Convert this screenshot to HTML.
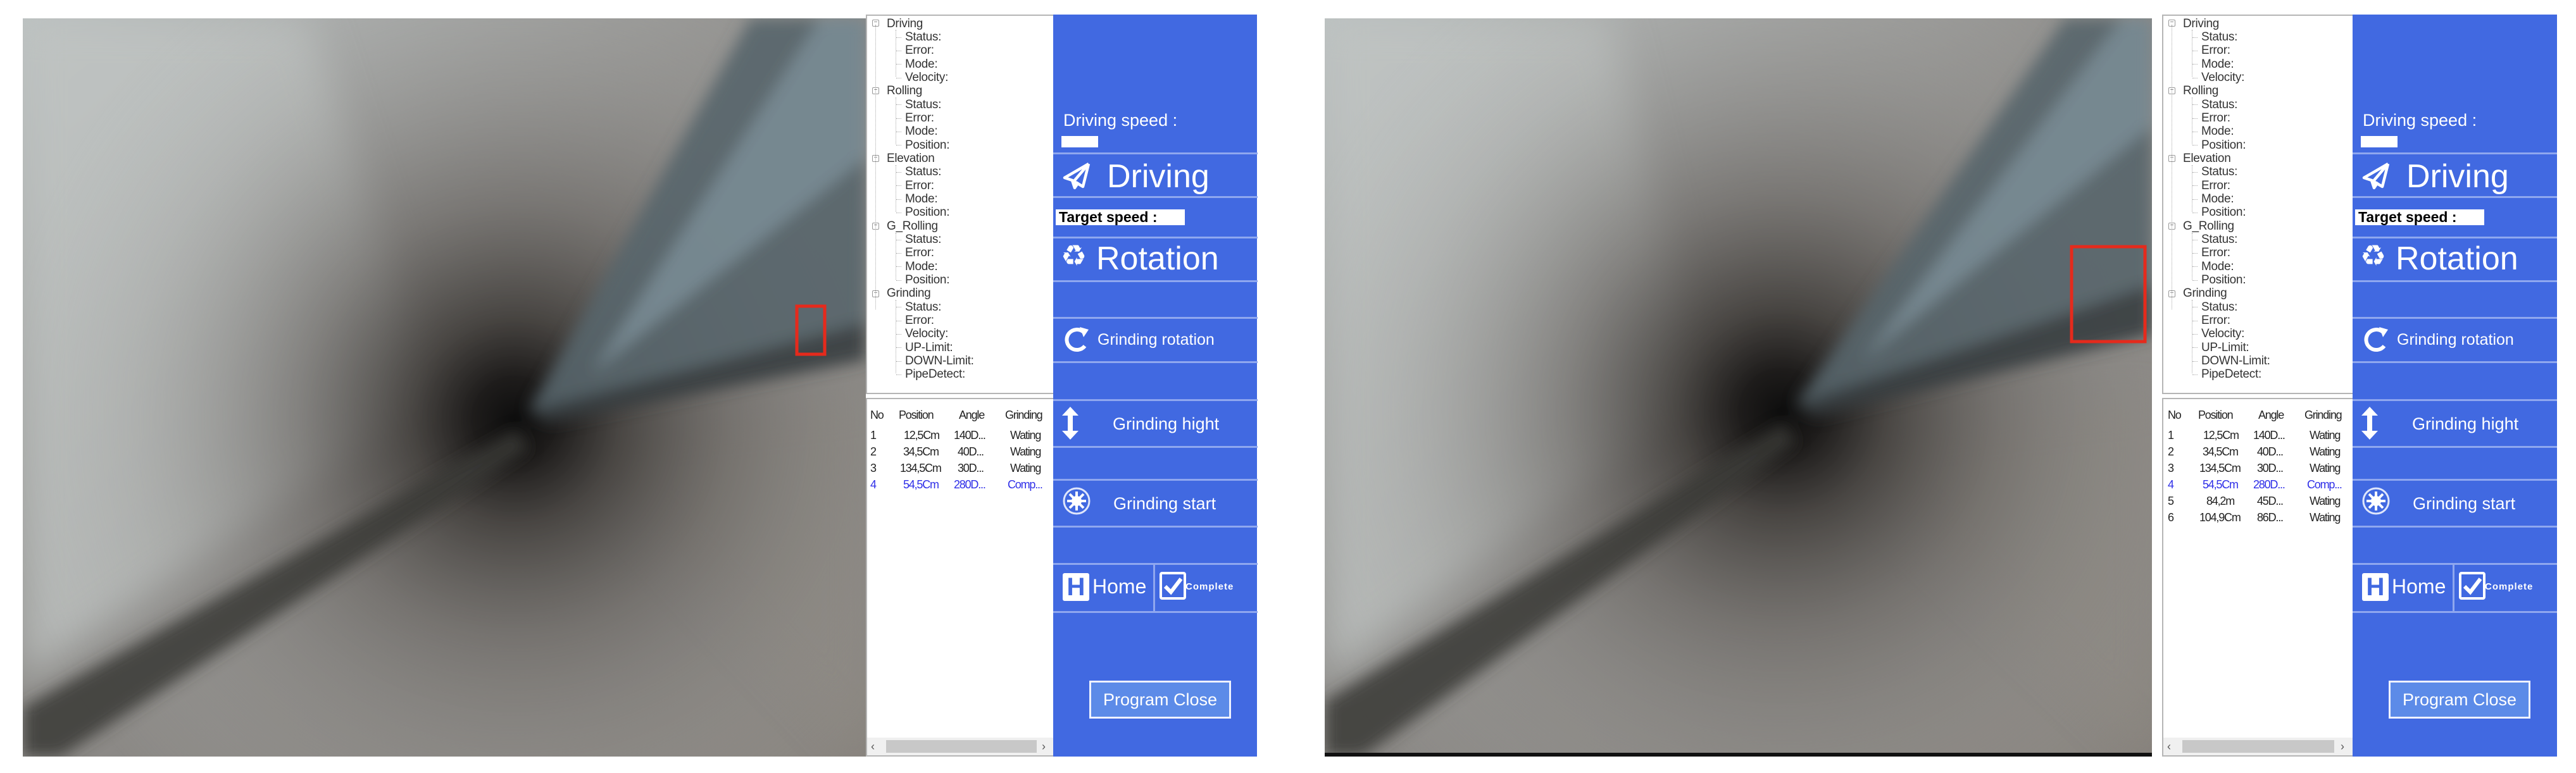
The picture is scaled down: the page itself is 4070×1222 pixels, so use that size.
<!DOCTYPE html>
<html><head><meta charset="utf-8">
<style>
*{margin:0;padding:0;box-sizing:border-box}
body{width:4070px;height:1222px;background:#fff;position:relative;overflow:hidden;font-family:"Liberation Sans","DejaVu Sans",sans-serif}
.cam{position:absolute}
.grp{position:absolute;top:23px;width:618px;height:1173px}
.tree{position:absolute;left:0;top:0;width:296px;height:600px;border:2px solid #b5b5b5;border-right:none;background:#fff;overflow:hidden}
.tr{position:absolute;font-size:19px;color:#333;line-height:21px;white-space:nowrap;letter-spacing:-0.3px}
.pm{position:absolute;width:11px;height:11px;border:1px solid #999;border-radius:2px;font-size:10px;line-height:8px;text-align:center;color:#666}
.vl{position:absolute;border-left:1px dotted #aaa}
.hl{position:absolute;border-top:1px dotted #aaa;width:8px}
.list{position:absolute;left:0;top:606px;width:296px;height:567px;border:2px solid #b5b5b5;border-right:none;background:#fff;overflow:hidden}
.lr{position:absolute;font-size:18px;line-height:22px;color:#222;letter-spacing:-1.2px;white-space:nowrap}
.blue{position:absolute;left:296px;top:0;width:322px;height:1173px;background:#4169e1}
.sep{position:absolute;left:0;width:323px;height:3px;background:#8fa7ef}
.t{position:absolute;color:#fff;white-space:nowrap}
</style></head><body>

<svg width="0" height="0" style="position:absolute">
<defs>
<linearGradient id="bg1" x1="0" y1="0" x2="1" y2="1"><stop offset="0" stop-color="#bcc1c1"/><stop offset="0.5" stop-color="#8c8a87"/><stop offset="1" stop-color="#86817b"/></linearGradient>
<filter id="bl" x="-0.2" y="-0.2" width="1.4" height="1.4"><feGaussianBlur stdDeviation="30"/></filter>
<filter id="bl2" x="-0.2" y="-0.2" width="1.4" height="1.4"><feGaussianBlur stdDeviation="12"/></filter>
</defs></svg>

<!-- LEFT CAMERA -->
<svg class="cam" style="left:36px;top:29px" width="1332" height="1167" viewBox="0 0 1332 1167">
<defs>
<radialGradient id="rc1" cx="777" cy="634" r="820" gradientUnits="userSpaceOnUse"><stop offset="0" stop-color="#0e0e0e"/><stop offset="0.08" stop-color="#1e1c1b"/><stop offset="0.2" stop-color="#45423f" stop-opacity="0.95"/><stop offset="0.42" stop-color="#6e6b68" stop-opacity="0.7"/><stop offset="0.75" stop-color="#9a9a98" stop-opacity="0.25"/><stop offset="1" stop-color="#b8bbba" stop-opacity="0"/></radialGradient>
</defs>
<rect width="1332" height="1167" fill="url(#bg1)"/>
<g filter="url(#bl)">
<polygon points="0,0 450,0 650,600 0,1050" fill="#c0c4c3" opacity="0.75"/>
<polygon points="850,660 1332,1167 1332,600" fill="#8a847d" opacity="0.8"/>
</g>
<rect width="1332" height="1167" fill="url(#rc1)"/>
<g filter="url(#bl2)">
<polygon points="800,620 1150,0 1332,0 1332,480" fill="#56656c" opacity="0.9"/>
<polygon points="900,560 1260,0 1332,0 1332,220" fill="#7d9098" opacity="0.8"/>
<polygon points="800,620 1332,480 1332,540 830,640" fill="#383d40" opacity="0.9"/>
<polygon points="780,650 0,1090 0,1167 60,1167 800,680" fill="#3a3835" opacity="0.85"/>
</g>
<rect x="1223" y="455" width="44" height="76" fill="none" stroke="#e52a1c" stroke-width="5"/>
</svg>

<!-- RIGHT CAMERA -->
<svg class="cam" style="left:2093px;top:29px" width="1307" height="1167" viewBox="0 0 1307 1167">
<defs>
<radialGradient id="rc2" cx="722" cy="621" r="820" gradientUnits="userSpaceOnUse"><stop offset="0" stop-color="#0e0e0e"/><stop offset="0.08" stop-color="#1e1c1b"/><stop offset="0.2" stop-color="#45423f" stop-opacity="0.95"/><stop offset="0.42" stop-color="#6e6b68" stop-opacity="0.7"/><stop offset="0.75" stop-color="#9a9a98" stop-opacity="0.25"/><stop offset="1" stop-color="#b8bbba" stop-opacity="0"/></radialGradient>
</defs>
<rect width="1307" height="1167" fill="url(#bg1)"/>
<g filter="url(#bl)">
<polygon points="0,0 450,0 600,600 0,1050" fill="#c0c4c3" opacity="0.75"/>
<polygon points="780,660 1307,1167 1307,600" fill="#8a847d" opacity="0.8"/>
</g>
<rect width="1307" height="1167" fill="url(#rc2)"/>
<g filter="url(#bl2)">
<polygon points="745,610 1170,0 1307,0 1307,420" fill="#56656c" opacity="0.9"/>
<polygon points="850,540 1260,0 1307,0 1307,170" fill="#7d9098" opacity="0.8"/>
<polygon points="745,610 1307,420 1307,500 775,630" fill="#383d40" opacity="0.9"/>
<polygon points="725,640 0,1080 0,1167 60,1167 745,670" fill="#3a3835" opacity="0.85"/>
</g>
<rect x="0" y="1161" width="1307" height="6" fill="#111"/>
<rect x="1180" y="361" width="116" height="150" fill="none" stroke="#e52a1c" stroke-width="5"/>
</svg>

<!-- PANEL LEFT -->
<div class="grp" style="left:1368px">
 <div class="tree">
  <div class="vl" style="left:13px;top:14px;height:450px"></div>
  <div class="pm" style="left:8px;top:6px">−</div><div class="tr" style="left:31px;top:2px">Driving</div>
  <div class="vl" style="left:45px;top:22px;height:74px"></div>
  <div class="hl" style="left:46px;top:34px"></div><div class="tr" style="left:60px;top:23px">Status:</div>
  <div class="hl" style="left:46px;top:55px"></div><div class="tr" style="left:60px;top:44px">Error:</div>
  <div class="hl" style="left:46px;top:76px"></div><div class="tr" style="left:60px;top:66px">Mode:</div>
  <div class="hl" style="left:46px;top:98px"></div><div class="tr" style="left:60px;top:87px">Velocity:</div>
  <div class="pm" style="left:8px;top:113px">−</div><div class="tr" style="left:31px;top:108px">Rolling</div>
  <div class="vl" style="left:45px;top:129px;height:74px"></div>
  <div class="hl" style="left:46px;top:140px"></div><div class="tr" style="left:60px;top:130px">Status:</div>
  <div class="hl" style="left:46px;top:162px"></div><div class="tr" style="left:60px;top:151px">Error:</div>
  <div class="hl" style="left:46px;top:183px"></div><div class="tr" style="left:60px;top:172px">Mode:</div>
  <div class="hl" style="left:46px;top:204px"></div><div class="tr" style="left:60px;top:194px">Position:</div>
  <div class="pm" style="left:8px;top:220px">−</div><div class="tr" style="left:31px;top:215px">Elevation</div>
  <div class="vl" style="left:45px;top:236px;height:74px"></div>
  <div class="hl" style="left:46px;top:247px"></div><div class="tr" style="left:60px;top:236px">Status:</div>
  <div class="hl" style="left:46px;top:268px"></div><div class="tr" style="left:60px;top:258px">Error:</div>
  <div class="hl" style="left:46px;top:290px"></div><div class="tr" style="left:60px;top:279px">Mode:</div>
  <div class="hl" style="left:46px;top:311px"></div><div class="tr" style="left:60px;top:300px">Position:</div>
  <div class="pm" style="left:8px;top:327px">−</div><div class="tr" style="left:31px;top:322px">G_Rolling</div>
  <div class="vl" style="left:45px;top:343px;height:74px"></div>
  <div class="hl" style="left:46px;top:354px"></div><div class="tr" style="left:60px;top:343px">Status:</div>
  <div class="hl" style="left:46px;top:375px"></div><div class="tr" style="left:60px;top:364px">Error:</div>
  <div class="hl" style="left:46px;top:396px"></div><div class="tr" style="left:60px;top:386px">Mode:</div>
  <div class="hl" style="left:46px;top:418px"></div><div class="tr" style="left:60px;top:407px">Position:</div>
  <div class="pm" style="left:8px;top:434px">−</div><div class="tr" style="left:31px;top:428px">Grinding</div>
  <div class="vl" style="left:45px;top:449px;height:116px"></div>
  <div class="hl" style="left:46px;top:460px"></div><div class="tr" style="left:60px;top:450px">Status:</div>
  <div class="hl" style="left:46px;top:482px"></div><div class="tr" style="left:60px;top:471px">Error:</div>
  <div class="hl" style="left:46px;top:503px"></div><div class="tr" style="left:60px;top:492px">Velocity:</div>
  <div class="hl" style="left:46px;top:524px"></div><div class="tr" style="left:60px;top:514px">UP-Limit:</div>
  <div class="hl" style="left:46px;top:546px"></div><div class="tr" style="left:60px;top:535px">DOWN-Limit:</div>
  <div class="hl" style="left:46px;top:567px"></div><div class="tr" style="left:60px;top:556px">PipeDetect:</div>
 </div>
 <div class="list">
  <div class="lr" style="left:5px;top:14px">No</div><div class="lr" style="left:50px;top:14px">Position</div><div class="lr" style="left:145px;top:14px">Angle</div><div class="lr" style="left:218px;top:14px">Grinding</div>
  <div class="lr" style="left:5px;top:46px">1</div><div class="lr" style="left:58px;top:46px">12,5Cm</div><div class="lr" style="left:137px;top:46px">140D...</div><div class="lr" style="left:226px;top:46px">Wating</div>
  <div class="lr" style="left:5px;top:72px">2</div><div class="lr" style="left:57px;top:72px">34,5Cm</div><div class="lr" style="left:143px;top:72px">40D...</div><div class="lr" style="left:226px;top:72px">Wating</div>
  <div class="lr" style="left:5px;top:98px">3</div><div class="lr" style="left:52px;top:98px">134,5Cm</div><div class="lr" style="left:143px;top:98px">30D...</div><div class="lr" style="left:226px;top:98px">Wating</div>
  <div class="lr" style="left:5px;top:124px;color:#2f2fe8">4</div><div class="lr" style="left:57px;top:124px;color:#2f2fe8">54,5Cm</div><div class="lr" style="left:137px;top:124px;color:#2f2fe8">280D...</div><div class="lr" style="left:222px;top:124px;color:#2f2fe8">Comp...</div>
  <div style="position:absolute;left:0;bottom:0;width:296px;height:28px;background:#f0f0f0"></div>
  <div style="position:absolute;left:30px;bottom:4px;width:238px;height:20px;background:#c8c8c8"></div>
  <div class="lr" style="left:6px;bottom:3px;font-size:18px;color:#555">‹</div><div class="lr" style="left:276px;bottom:3px;font-size:18px;color:#555">›</div>
 </div>
 <div class="blue">
  <div class="t" style="left:16px;top:152px;font-size:27px">Driving speed :</div>
  <div style="position:absolute;left:13px;top:192px;width:58px;height:18px;background:#fff"></div>
  <div class="sep" style="top:218px"></div><div class="sep" style="top:287px"></div>
  <svg style="position:absolute;left:14px;top:232px" width="46" height="46" viewBox="0 0 46 46"><path d="M42 4 L4 26 L16 30 L20 42 L26 33 M42 4 L33 40 L16 30 M42 4 L20 30 L20 42" fill="none" stroke="#fff" stroke-width="4.5" stroke-linejoin="round"/></svg>
  <div class="t" style="left:85px;top:226px;font-size:52px">Driving</div>
  <div style="position:absolute;left:4px;top:308px;width:204px;height:25px;background:#fff;color:#000;font-weight:bold;font-size:23px;line-height:25px;padding-left:5px;white-space:nowrap">Target speed :</div>
  <div class="sep" style="top:351px"></div><div class="sep" style="top:420px"></div>
  <div class="t" style="left:12px;top:354px;font-size:46px">♻</div>
  <div class="t" style="left:68px;top:356px;font-size:52px">Rotation</div>
  <div class="sep" style="top:478px"></div><div class="sep" style="top:548px"></div>
  <svg style="position:absolute;left:14px;top:492px" width="46" height="46" viewBox="0 0 46 46"><path d="M36 32 A16 16 0 1 1 34 10" fill="none" stroke="#fff" stroke-width="6"/><path d="M28 2 L42 6 L34 18 Z" fill="#fff"/></svg>
  <div class="t" style="left:70px;top:500px;font-size:25px">Grinding rotation</div>
  <div class="sep" style="top:608px"></div><div class="sep" style="top:682px"></div>
  <svg style="position:absolute;left:12px;top:618px" width="30" height="56" viewBox="0 0 30 56"><path d="M15 2 L28 16 H19 V40 H28 L15 54 L2 40 H11 V16 H2 Z" fill="#fff"/></svg>
  <div class="t" style="left:94px;top:632px;font-size:27px">Grinding hight</div>
  <div class="sep" style="top:734px"></div><div class="sep" style="top:808px"></div>
  <svg style="position:absolute;left:14px;top:746px" width="46" height="46" viewBox="0 0 46 46"><circle cx="23" cy="23" r="20" fill="none" stroke="#dfe6fb" stroke-width="3"/><path d="M23 8V38M8 23H38M12 12L34 34M34 12L12 34" stroke="#fff" stroke-width="4"/><circle cx="23" cy="23" r="8" fill="#fff"/></svg>
  <div class="t" style="left:95px;top:758px;font-size:27px">Grinding start</div>
  <div class="sep" style="top:867px"></div><div class="sep" style="top:943px"></div>
  <div style="position:absolute;left:158px;top:869px;width:3px;height:75px;background:#8fa7ef"></div>
  <div style="position:absolute;left:15px;top:883px;width:42px;height:44px;background:#fff;border-radius:3px;color:#4169e1;font-weight:bold;font-size:40px;line-height:44px;text-align:center">H</div>
  <div class="t" style="left:62px;top:886px;font-size:32px">Home</div>
  <div style="position:absolute;left:168px;top:881px;width:42px;height:44px;border:4px solid #fff;border-radius:4px"></div>
  <svg style="position:absolute;left:172px;top:886px" width="34" height="34" viewBox="0 0 34 34"><path d="M5 18 L14 27 L30 6" fill="none" stroke="#fff" stroke-width="6"/></svg>
  <div class="t" style="left:209px;top:896px;font-size:15px;font-weight:bold;letter-spacing:1px">Complete</div>
  <div style="position:absolute;left:57px;top:1053px;width:224px;height:60px;border:3px solid #eef2ff;background:#5c8be8;color:#fff;font-size:27px;line-height:54px;text-align:center">Program Close</div>
 </div>
</div>

<!-- PANEL RIGHT -->
<div class="grp" style="left:3416px;width:624px">
 <div class="tree" style="width:301px">
  <div class="vl" style="left:13px;top:14px;height:450px"></div>
  <div class="pm" style="left:8px;top:6px">−</div><div class="tr" style="left:31px;top:2px">Driving</div>
  <div class="vl" style="left:45px;top:22px;height:74px"></div>
  <div class="hl" style="left:46px;top:34px"></div><div class="tr" style="left:60px;top:23px">Status:</div>
  <div class="hl" style="left:46px;top:55px"></div><div class="tr" style="left:60px;top:44px">Error:</div>
  <div class="hl" style="left:46px;top:76px"></div><div class="tr" style="left:60px;top:66px">Mode:</div>
  <div class="hl" style="left:46px;top:98px"></div><div class="tr" style="left:60px;top:87px">Velocity:</div>
  <div class="pm" style="left:8px;top:113px">−</div><div class="tr" style="left:31px;top:108px">Rolling</div>
  <div class="vl" style="left:45px;top:129px;height:74px"></div>
  <div class="hl" style="left:46px;top:140px"></div><div class="tr" style="left:60px;top:130px">Status:</div>
  <div class="hl" style="left:46px;top:162px"></div><div class="tr" style="left:60px;top:151px">Error:</div>
  <div class="hl" style="left:46px;top:183px"></div><div class="tr" style="left:60px;top:172px">Mode:</div>
  <div class="hl" style="left:46px;top:204px"></div><div class="tr" style="left:60px;top:194px">Position:</div>
  <div class="pm" style="left:8px;top:220px">−</div><div class="tr" style="left:31px;top:215px">Elevation</div>
  <div class="vl" style="left:45px;top:236px;height:74px"></div>
  <div class="hl" style="left:46px;top:247px"></div><div class="tr" style="left:60px;top:236px">Status:</div>
  <div class="hl" style="left:46px;top:268px"></div><div class="tr" style="left:60px;top:258px">Error:</div>
  <div class="hl" style="left:46px;top:290px"></div><div class="tr" style="left:60px;top:279px">Mode:</div>
  <div class="hl" style="left:46px;top:311px"></div><div class="tr" style="left:60px;top:300px">Position:</div>
  <div class="pm" style="left:8px;top:327px">−</div><div class="tr" style="left:31px;top:322px">G_Rolling</div>
  <div class="vl" style="left:45px;top:343px;height:74px"></div>
  <div class="hl" style="left:46px;top:354px"></div><div class="tr" style="left:60px;top:343px">Status:</div>
  <div class="hl" style="left:46px;top:375px"></div><div class="tr" style="left:60px;top:364px">Error:</div>
  <div class="hl" style="left:46px;top:396px"></div><div class="tr" style="left:60px;top:386px">Mode:</div>
  <div class="hl" style="left:46px;top:418px"></div><div class="tr" style="left:60px;top:407px">Position:</div>
  <div class="pm" style="left:8px;top:434px">−</div><div class="tr" style="left:31px;top:428px">Grinding</div>
  <div class="vl" style="left:45px;top:449px;height:116px"></div>
  <div class="hl" style="left:46px;top:460px"></div><div class="tr" style="left:60px;top:450px">Status:</div>
  <div class="hl" style="left:46px;top:482px"></div><div class="tr" style="left:60px;top:471px">Error:</div>
  <div class="hl" style="left:46px;top:503px"></div><div class="tr" style="left:60px;top:492px">Velocity:</div>
  <div class="hl" style="left:46px;top:524px"></div><div class="tr" style="left:60px;top:514px">UP-Limit:</div>
  <div class="hl" style="left:46px;top:546px"></div><div class="tr" style="left:60px;top:535px">DOWN-Limit:</div>
  <div class="hl" style="left:46px;top:567px"></div><div class="tr" style="left:60px;top:556px">PipeDetect:</div>
 </div>
 <div class="list" style="width:301px">
  <div class="lr" style="left:7px;top:14px">No</div><div class="lr" style="left:55px;top:14px">Position</div><div class="lr" style="left:150px;top:14px">Angle</div><div class="lr" style="left:223px;top:14px">Grinding</div>
  <div class="lr" style="left:7px;top:46px">1</div><div class="lr" style="left:63px;top:46px">12,5Cm</div><div class="lr" style="left:142px;top:46px">140D...</div><div class="lr" style="left:231px;top:46px">Wating</div>
  <div class="lr" style="left:7px;top:72px">2</div><div class="lr" style="left:62px;top:72px">34,5Cm</div><div class="lr" style="left:148px;top:72px">40D...</div><div class="lr" style="left:231px;top:72px">Wating</div>
  <div class="lr" style="left:7px;top:98px">3</div><div class="lr" style="left:57px;top:98px">134,5Cm</div><div class="lr" style="left:148px;top:98px">30D...</div><div class="lr" style="left:231px;top:98px">Wating</div>
  <div class="lr" style="left:7px;top:124px;color:#2f2fe8">4</div><div class="lr" style="left:62px;top:124px;color:#2f2fe8">54,5Cm</div><div class="lr" style="left:142px;top:124px;color:#2f2fe8">280D...</div><div class="lr" style="left:227px;top:124px;color:#2f2fe8">Comp...</div>
  <div class="lr" style="left:7px;top:150px">5</div><div class="lr" style="left:68px;top:150px">84,2m</div><div class="lr" style="left:148px;top:150px">45D...</div><div class="lr" style="left:231px;top:150px">Wating</div>
  <div class="lr" style="left:7px;top:176px">6</div><div class="lr" style="left:57px;top:176px">104,9Cm</div><div class="lr" style="left:148px;top:176px">86D...</div><div class="lr" style="left:231px;top:176px">Wating</div>
  <div style="position:absolute;left:0;bottom:0;width:301px;height:28px;background:#f0f0f0"></div>
  <div style="position:absolute;left:30px;bottom:4px;width:240px;height:20px;background:#c8c8c8"></div>
  <div class="lr" style="left:6px;bottom:3px;font-size:18px;color:#555">‹</div><div class="lr" style="left:280px;bottom:3px;font-size:18px;color:#555">›</div>
 </div>
 <div class="blue" style="left:301px;width:323px">
  <div class="t" style="left:16px;top:152px;font-size:27px">Driving speed :</div>
  <div style="position:absolute;left:13px;top:192px;width:58px;height:18px;background:#fff"></div>
  <div class="sep" style="top:218px"></div><div class="sep" style="top:287px"></div>
  <svg style="position:absolute;left:14px;top:232px" width="46" height="46" viewBox="0 0 46 46"><path d="M42 4 L4 26 L16 30 L20 42 L26 33 M42 4 L33 40 L16 30 M42 4 L20 30 L20 42" fill="none" stroke="#fff" stroke-width="4.5" stroke-linejoin="round"/></svg>
  <div class="t" style="left:85px;top:226px;font-size:52px">Driving</div>
  <div style="position:absolute;left:4px;top:308px;width:204px;height:25px;background:#fff;color:#000;font-weight:bold;font-size:23px;line-height:25px;padding-left:5px;white-space:nowrap">Target speed :</div>
  <div class="sep" style="top:351px"></div><div class="sep" style="top:420px"></div>
  <div class="t" style="left:12px;top:354px;font-size:46px">♻</div>
  <div class="t" style="left:68px;top:356px;font-size:52px">Rotation</div>
  <div class="sep" style="top:478px"></div><div class="sep" style="top:548px"></div>
  <svg style="position:absolute;left:14px;top:492px" width="46" height="46" viewBox="0 0 46 46"><path d="M36 32 A16 16 0 1 1 34 10" fill="none" stroke="#fff" stroke-width="6"/><path d="M28 2 L42 6 L34 18 Z" fill="#fff"/></svg>
  <div class="t" style="left:70px;top:500px;font-size:25px">Grinding rotation</div>
  <div class="sep" style="top:608px"></div><div class="sep" style="top:682px"></div>
  <svg style="position:absolute;left:12px;top:618px" width="30" height="56" viewBox="0 0 30 56"><path d="M15 2 L28 16 H19 V40 H28 L15 54 L2 40 H11 V16 H2 Z" fill="#fff"/></svg>
  <div class="t" style="left:94px;top:632px;font-size:27px">Grinding hight</div>
  <div class="sep" style="top:734px"></div><div class="sep" style="top:808px"></div>
  <svg style="position:absolute;left:14px;top:746px" width="46" height="46" viewBox="0 0 46 46"><circle cx="23" cy="23" r="20" fill="none" stroke="#dfe6fb" stroke-width="3"/><path d="M23 8V38M8 23H38M12 12L34 34M34 12L12 34" stroke="#fff" stroke-width="4"/><circle cx="23" cy="23" r="8" fill="#fff"/></svg>
  <div class="t" style="left:95px;top:758px;font-size:27px">Grinding start</div>
  <div class="sep" style="top:867px"></div><div class="sep" style="top:943px"></div>
  <div style="position:absolute;left:158px;top:869px;width:3px;height:75px;background:#8fa7ef"></div>
  <div style="position:absolute;left:15px;top:883px;width:42px;height:44px;background:#fff;border-radius:3px;color:#4169e1;font-weight:bold;font-size:40px;line-height:44px;text-align:center">H</div>
  <div class="t" style="left:62px;top:886px;font-size:32px">Home</div>
  <div style="position:absolute;left:168px;top:881px;width:42px;height:44px;border:4px solid #fff;border-radius:4px"></div>
  <svg style="position:absolute;left:172px;top:886px" width="34" height="34" viewBox="0 0 34 34"><path d="M5 18 L14 27 L30 6" fill="none" stroke="#fff" stroke-width="6"/></svg>
  <div class="t" style="left:209px;top:896px;font-size:15px;font-weight:bold;letter-spacing:1px">Complete</div>
  <div style="position:absolute;left:57px;top:1053px;width:224px;height:60px;border:3px solid #eef2ff;background:#5c8be8;color:#fff;font-size:27px;line-height:54px;text-align:center">Program Close</div>
 </div>
</div>
</body></html>
